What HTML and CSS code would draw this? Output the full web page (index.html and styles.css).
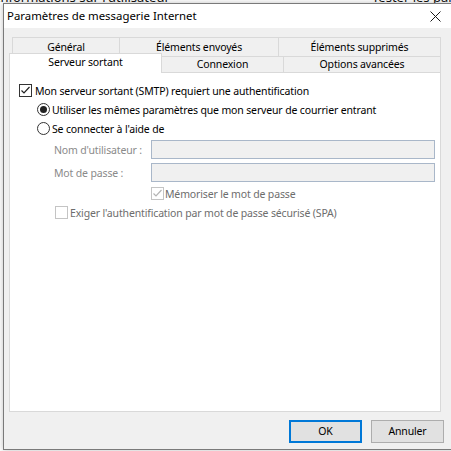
FILE: index.html
```html
<!DOCTYPE html>
<html lang="fr">
<head>
<meta charset="utf-8">
<title>Paramètres de messagerie Internet</title>
<link rel="stylesheet" href="styles.css">
</head>
<body>
<div class="desk">
  <div class="behind-top">
    <span class="behind-title">Informations sur l'utilisateur</span>
    <span class="behind-title right">Tester les paramètres</span>
  </div>
</div>

<div class="dialog">
  <div class="titlebar">
    <span class="title">Paramètres de messagerie Internet</span>
    <svg class="close" width="11" height="11" viewBox="0 0 11 11"><path d="M0.5 0.5 L10.5 10.5 M10.5 0.5 L0.5 10.5" stroke="#1a1a1a" stroke-width="1" fill="none"/></svg>
  </div>
  <div class="body">
    <div class="tabs">
      <div class="tabrow back">
        <div class="tab w1">Général</div>
        <div class="tab w2">Éléments envoyés</div>
        <div class="tab w3">Éléments supprimés</div>
      </div>
      <div class="tabrow front">
        <div class="tab sel">Serveur sortant</div>
        <div class="tab w5">Connexion</div>
        <div class="tab w6">Options avancées</div>
      </div>
    </div>
    <div class="panel">
      <div class="row r-main">
        <svg class="box" width="13" height="13" viewBox="0 0 13 13"><rect x="0.5" y="0.5" width="12" height="12" fill="#fff" stroke="#333"/><path d="M2.5 6.5 L5 9 L10.5 3" stroke="#222" stroke-width="1.2" fill="none"/></svg>
        <span class="lbl">Mon serveur sortant (SMTP) requiert une authentification</span>
      </div>
      <div class="row r-radio">
        <svg class="radio" width="13" height="13" viewBox="0 0 13 13"><circle cx="6.5" cy="6.5" r="6" fill="#fff" stroke="#333"/><circle cx="6.5" cy="6.5" r="3.5" fill="#222"/></svg>
        <span class="lbl">Utiliser les mêmes paramètres que mon serveur de courrier entrant</span>
      </div>
      <div class="row r-radio">
        <svg class="radio" width="13" height="13" viewBox="0 0 13 13"><circle cx="6.5" cy="6.5" r="6" fill="#fff" stroke="#333"/></svg>
        <span class="lbl">Se connecter à l'aide de</span>
      </div>
      <div class="field first">
        <span class="flabel">Nom d'utilisateur :</span>
        <div class="input"></div>
      </div>
      <div class="field">
        <span class="flabel">Mot de passe :</span>
        <div class="input"></div>
      </div>
      <div class="row r-remember">
        <svg class="box" width="13" height="13" viewBox="0 0 13 13"><rect x="0.5" y="0.5" width="12" height="12" fill="#fff" stroke="#c4c4c4"/><path d="M2.5 6.5 L5 9 L10.5 3" stroke="#b4b4b4" stroke-width="1.2" fill="none"/></svg>
        <span class="lbl dis">Mémoriser le mot de passe</span>
      </div>
      <div class="row r-spa">
        <svg class="box" width="13" height="13" viewBox="0 0 13 13"><rect x="0.5" y="0.5" width="12" height="12" fill="#fff" stroke="#c4c4c4"/></svg>
        <span class="lbl dis">Exiger l'authentification par mot de passe sécurisé (SPA)</span>
      </div>
    </div>
    <div class="buttons">
      <div class="btn default">OK</div>
      <div class="btn">Annuler</div>
    </div>
  </div>
</div>
</body>
</html>
```

FILE: styles.css
```css
html, body {
  margin: 0;
  padding: 0;
}
body {
  width: 451px;
  height: 451px;
  overflow: hidden;
  position: relative;
  background: #ffffff;
  font-family: "Noto Sans", "Open Sans", sans-serif;
  font-size: 10.5px;
  letter-spacing: -0.15px;
  color: #000;
}
.desk {
  height: 451px;
  background: #ffffff;
  overflow: hidden;
}
.behind-top {
  display: grid;
  grid-template-columns: 376px auto;
  margin-top: -10px;
  margin-left: -4px;
  font-size: 13px;
  line-height: 14px;
  letter-spacing: 0;
  white-space: nowrap;
}
.behind-title {
  color: #111;
}
.dialog {
  position: absolute;
  left: 3px;
  top: 3px;
  width: 455px;
  height: 447px;
  box-sizing: border-box;
  border: 1px solid #7a7a7a;
  background: #f0f0f0;
  display: flex;
  flex-direction: column;
  box-shadow: 0 0 6px rgba(0,0,0,0.25);
}
.titlebar {
  height: 24px;
  background: #ffffff;
  display: flex;
  align-items: center;
  padding-left: 3px;
  flex: none;
}
.title {
  font-size: 11.4px;
  letter-spacing: 0;
  color: #000;
  padding-bottom: 1px;
}
.close {
  margin-left: auto;
  margin-right: 16px;
  margin-top: 1px;
}
.body {
  flex: 1;
  display: flex;
  flex-direction: column;
  padding: 9px 0 0 5px;
}
.tabs {
  display: flex;
  flex-direction: column;
}
.tabrow {
  display: flex;
}
.tabrow.back {
  margin-left: 3px;
  height: 20px;
}
.tabrow.front {
  height: 15px;
  align-items: flex-end;
}
.tab {
  box-sizing: border-box;
  border: 1px solid #d9d9d9;
  border-bottom: none;
  background: #f0f0f0;
  display: flex;
  align-items: center;
  justify-content: center;
  color: #000;
  margin-right: -1px;
  white-space: nowrap;
}
.back .tab {
  height: 20px;
  padding-bottom: 1px;
}
.front .tab {
  height: 16px;
  padding-bottom: 1px;
}
.w1 { width: 108px; }
.w2 { width: 160px; }
.w3 { width: 163px; }
.front .tab.sel {
  width: 153px;
  height: 20px;
  background: #ffffff;
  position: relative;
  z-index: 1;
  margin-bottom: -1px;
  padding-bottom: 3px;
}
.w5 { width: 123px; }
.w6 { width: 158px; }
.panel {
  width: 432px;
  height: 340px;
  box-sizing: border-box;
  border: 1px solid #d9d9d9;
  background: #ffffff;
  display: flex;
  flex-direction: column;
  padding-top: 8px;
}
.row {
  height: 19px;
  display: flex;
  align-items: center;
}
.r-main { margin-left: 9px; }
.r-main .lbl { margin-left: 3px; }
.r-radio { margin-left: 27px; }
.r-radio .lbl { margin-left: 2px; }
.lbl { white-space: nowrap; }
.lbl.dis { color: #6d6d6d; }
.field {
  display: flex;
  align-items: center;
  height: 19px;
  margin-left: 44px;
  margin-top: 4px;
}
.field.first { margin-top: 2px; }
.flabel {
  width: 97px;
  color: #8a8a8a;
  white-space: nowrap;
}
.input {
  width: 284px;
  height: 19px;
  box-sizing: border-box;
  border: 1px solid #a9b7c9;
  background: #f0f0f0;
}
.r-remember { margin-left: 141px; margin-top: 2px; }
.r-remember .lbl { margin-left: 1px; }
.r-spa { margin-left: 45px; }
.r-spa .lbl { margin-left: 2px; }
.box, .radio { flex: none; }
.buttons {
  display: flex;
  justify-content: flex-end;
  padding-right: 13px;
  margin-top: 8px;
  gap: 9px;
}
.btn {
  width: 73px;
  height: 23px;
  box-sizing: border-box;
  border: 1px solid #adadad;
  background: #e1e1e1;
  display: flex;
  align-items: center;
  justify-content: center;
  padding-bottom: 1px;
}
.btn.default {
  border: 2px solid #0078d7;
}
```
